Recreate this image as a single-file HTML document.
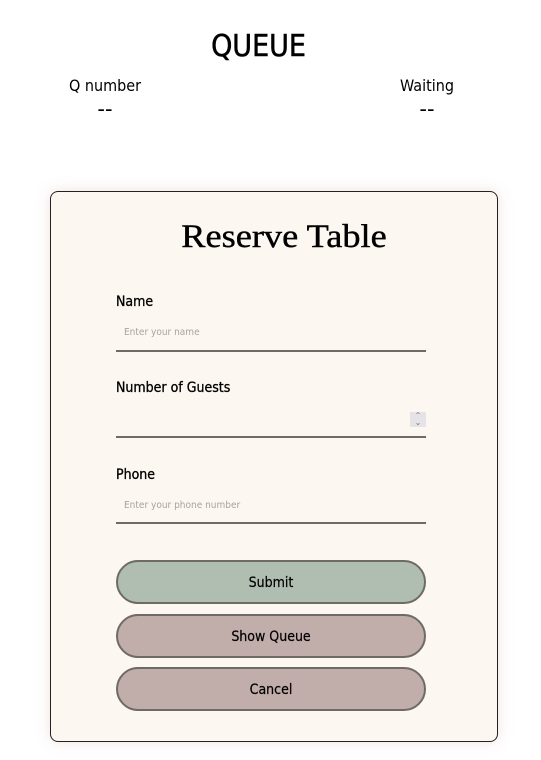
<!DOCTYPE html>
<html><head><style>
*{margin:0;padding:0;box-sizing:border-box}
body{width:541px;height:760px;background:#fff;font-family:"DejaVu Sans","Liberation Sans",sans-serif;position:relative;overflow:hidden;color:#000}
.a{position:absolute;white-space:nowrap}
.card{position:absolute;left:50px;top:191px;width:448px;height:551px;background:#fcf7f0;border:1px solid #222;border-radius:8px;box-shadow:0 0 14px rgba(220,170,170,.35)}
.lbl{position:absolute;left:116px;font-size:14px;font-weight:500;font-family:"DejaVu Sans Condensed","DejaVu Sans",sans-serif;-webkit-text-stroke:0.3px #000}
.ph{position:absolute;left:124px;font-size:10px;color:#aaa49a;font-family:"DejaVu Sans Condensed","DejaVu Sans",sans-serif}
.ln{position:absolute;left:116px;width:310px;height:2px;background:#6e6a66}
.btn{position:absolute;left:116px;width:310px;height:44px;border:2px solid #6e6a66;border-radius:22px;text-align:center;line-height:42px;font-size:14px;font-family:"DejaVu Sans Condensed","DejaVu Sans",sans-serif;-webkit-text-stroke:0.2px #000}
</style></head><body>
<div class="a" style="left:0;width:517px;text-align:center;top:29px;font-size:30px;font-family:'DejaVu Sans Condensed',sans-serif;-webkit-text-stroke:0.5px #000">QUEUE</div>
<div class="a" style="left:45px;width:120px;text-align:center;top:76px;font-size:16px;font-family:'DejaVu Sans Condensed',sans-serif">Q number</div>
<div class="a" style="left:45px;width:120px;text-align:center;top:97px;font-size:21px">--</div>
<div class="a" style="left:367px;width:120px;text-align:center;top:76px;font-size:16px;font-family:'DejaVu Sans Condensed',sans-serif">Waiting</div>
<div class="a" style="left:367px;width:120px;text-align:center;top:97px;font-size:21px">--</div>
<div class="card"></div>
<div class="a" style="left:50px;width:468px;text-align:center;top:219px;font-size:33px;font-family:'Liberation Serif',serif;-webkit-text-stroke:0.4px #000;transform:scaleX(1.1)">Reserve Table</div>
<div class="lbl" style="top:294px">Name</div>
<div class="ph" style="top:327px">Enter your name</div>
<div class="ln" style="top:350px"></div>
<div class="lbl" style="top:380px">Number of Guests</div>
<div class="a" style="left:410px;top:412px;width:16px;height:15px;background:#e6e3e6;font-size:8px;color:#777;text-align:center;line-height:7px">&#8963;<br>&#8964;</div>
<div class="ln" style="top:436px"></div>
<div class="lbl" style="top:467px">Phone</div>
<div class="ph" style="top:500px">Enter your phone number</div>
<div class="ln" style="top:522px"></div>
<div class="btn" style="top:560px;background:#afbeb0">Submit</div>
<div class="btn" style="top:614px;background:#c1adaa">Show Queue</div>
<div class="btn" style="top:667px;background:#c1adaa">Cancel</div>
</body></html>
